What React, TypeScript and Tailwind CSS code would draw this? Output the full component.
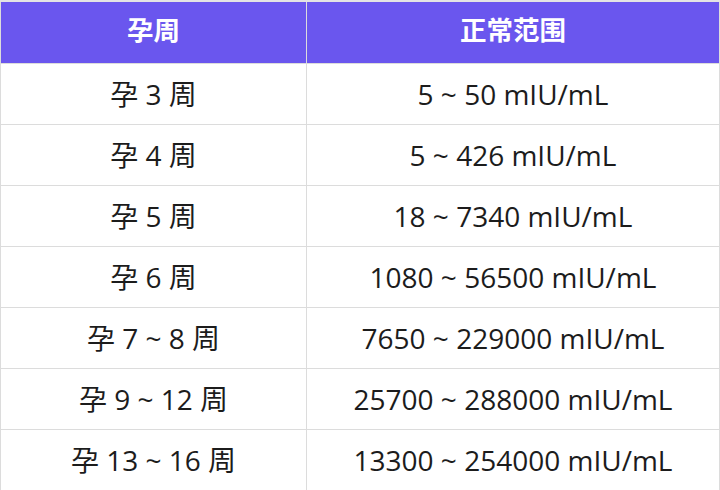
const rows: [string, string][] = [
  ["孕 3 周", "5 ~ 50 mIU/mL"],
  ["孕 4 周", "5 ~ 426 mIU/mL"],
  ["孕 5 周", "18 ~ 7340 mIU/mL"],
  ["孕 6 周", "1080 ~ 56500 mIU/mL"],
  ["孕 7 ~ 8 周", "7650 ~ 229000 mIU/mL"],
  ["孕 9 ~ 12 周", "25700 ~ 288000 mIU/mL"],
  ["孕 13 ~ 16 周", "13300 ~ 254000 mIU/mL"],
];

export default function App() {
  return (
    <main className="h-[490px] w-[720px] overflow-hidden border-t-2 border-[#e4e4e4] bg-white [font-family:'Open_Sans','Noto_Sans_CJK_SC',sans-serif]">
      <table className="w-full table-fixed border-collapse">
        <colgroup>
          <col className="w-[306px]" />
          <col />
        </colgroup>
        <thead>
          <tr className="h-[61px] bg-[#6a56ee] text-[26.5px] font-bold text-white">
            <th className="border-x border-[#dcdcdc] pb-0.5">孕周</th>
            <th className="border-x border-[#dcdcdc] pb-0.5">正常范围</th>
          </tr>
        </thead>
        <tbody>
          {rows.map(([week, range]) => (
            <tr key={week} className="h-[61px] text-[28px] text-[#1c1c1c]">
              <td className="border border-[#dcdcdc] text-center">{week}</td>
              <td className="border border-[#dcdcdc] text-center">{range}</td>
            </tr>
          ))}
        </tbody>
      </table>
    </main>
  );
}
